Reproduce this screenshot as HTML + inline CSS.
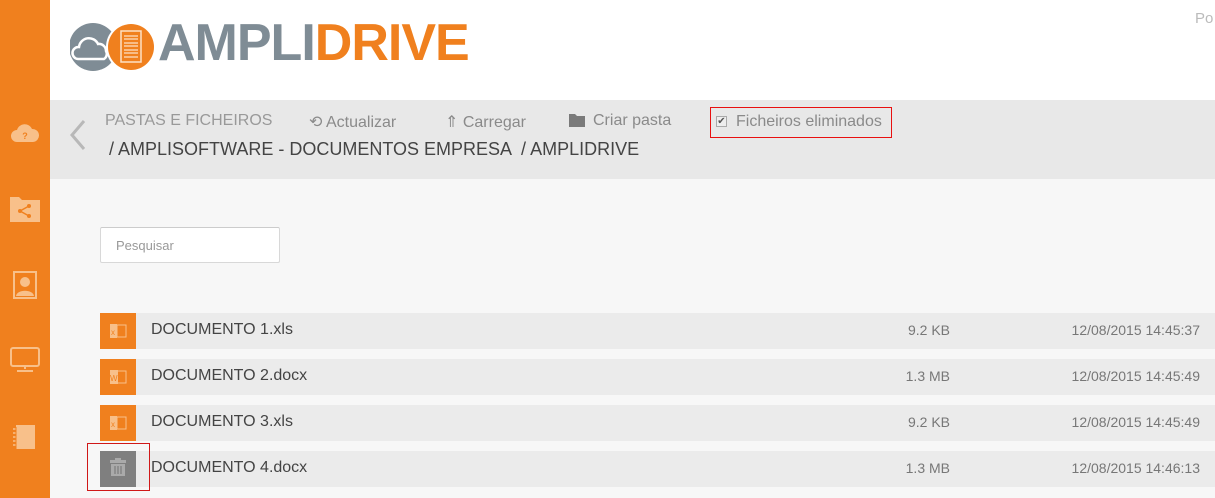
<!DOCTYPE html>
<html><head><meta charset="utf-8"><style>
*{margin:0;padding:0;box-sizing:border-box}
body{width:1215px;height:498px;overflow:hidden;background:#f7f7f7;font-family:"Liberation Sans",sans-serif;position:relative}
.side{position:absolute;left:0;top:0;width:50px;height:498px;background:#f0801e}
.side svg{position:absolute;left:10px}
.head{position:absolute;left:50px;top:0;right:0;height:100px;background:#fff}
.tool{position:absolute;left:50px;top:100px;right:0;height:79px;background:#e8e8e8}
.t{position:absolute;font-size:16px;color:#8a8a8a;white-space:nowrap}
.row{position:absolute;left:100px;right:0;height:36px;background:#ebebeb}
.row .ic{position:absolute;left:0;top:0;width:36px;height:36px;background:#f0801e}
.row .n{position:absolute;left:51px;top:8px;font-size:16px;color:#444}
.row .s{position:absolute;right:265px;top:9px;font-size:14px;color:#777}
.row .d{position:absolute;right:15px;top:9px;font-size:14px;color:#777}
</style></head><body>
<div class="side">
<svg style="top:122px" width="30" height="24" viewBox="0 0 30 24"><path d="M7 20a6 6 0 0 1 0-12 8 8 0 0 1 15-1 6 6 0 0 1 1 13z" fill="#f8c08a"/><text x="15" y="17" font-size="9" font-weight="bold" fill="#f0801e" text-anchor="middle" font-family="Liberation Sans">?</text></svg>
<svg style="top:196px" width="30" height="26" viewBox="0 0 30 26"><path d="M0 1h9l3 3h18v22H0z" fill="#f8c08a"/><circle cx="10" cy="15" r="2" fill="#f0801e"/><circle cx="19" cy="10" r="2" fill="#f0801e"/><circle cx="19" cy="20" r="2" fill="#f0801e"/><path d="M10 15L19 10M10 15L19 20" stroke="#f0801e" stroke-width="1.5"/></svg>
<svg style="top:271px" width="30" height="28" viewBox="0 0 30 28"><rect x="4" y="1" width="22" height="26" fill="none" stroke="#f8c08a" stroke-width="2"/><circle cx="15" cy="11" r="5" fill="#f8c08a"/><path d="M6 25c1-7 17-7 18 0z" fill="#f8c08a"/></svg>
<svg style="top:346px" width="30" height="26" viewBox="0 0 30 26"><rect x="1" y="2" width="28" height="18" rx="2" fill="none" stroke="#f8c08a" stroke-width="2"/><path d="M15 20v3M7 25h16" stroke="#f8c08a" stroke-width="2"/></svg>
<svg style="top:424px" width="30" height="26" viewBox="0 0 30 26"><rect x="6" y="1" width="19" height="24" fill="#f8c08a"/><path d="M3 5h6M3 9h6M3 13h6M3 17h6M3 21h6" stroke="#f8c08a" stroke-width="1.5"/><path d="M6 3v22" stroke="#f0801e" stroke-width="1"/></svg>
</div>
<div class="head">
<svg style="position:absolute;left:20px;top:19px" width="90" height="56" viewBox="0 0 90 56"><circle cx="23" cy="28" r="24" fill="#7f8c95"/><path d="M8 40a6 6 0 0 1 1-12 10 10 0 0 1 19-3 7 7 0 0 1 8 7 6 6 0 0 1-2 8z" fill="none" stroke="#fff" stroke-width="2.5"/><circle cx="61" cy="28" r="25" fill="#fff"/><circle cx="61" cy="28" r="23" fill="#f0801e"/><rect x="51" y="12" width="20" height="31" fill="none" stroke="#fde0c4" stroke-width="1.5"/><path d="M54 17h14M54 20h14M54 24h14M54 27h14M54 31h14M54 34h14M54 38h14" stroke="#fde0c4" stroke-width="1.3"/></svg>
<div style="position:absolute;left:108px;top:13px;font-size:52px;font-weight:bold;letter-spacing:-1px;color:#7f8c95">AMPLI<span style="color:#f0801e">DRIVE</span></div>
<div style="position:absolute;left:1145px;top:10px;font-size:15px;color:#bbb">Po</div>
</div>
<div class="tool">
<svg style="position:absolute;left:18px;top:19px" width="20" height="32" viewBox="0 0 20 32"><path d="M16 2L4 16l12 14" fill="none" stroke="#b8b8b8" stroke-width="3"/></svg>
<div class="t" style="left:55px;top:12px;color:#999">PASTAS E FICHEIROS</div>
<div class="t" style="left:259px;top:12px">⟲ Actualizar</div>
<div class="t" style="left:395px;top:12px">⇑ Carregar</div>
<svg style="position:absolute;left:519px;top:14px" width="16" height="13" viewBox="0 0 16 13"><path d="M0 0h6l2 2h8v11H0z" fill="#7a7a7a"/></svg>
<div class="t" style="left:543px;top:12px">Criar pasta</div>
<div style="position:absolute;left:660px;top:7px;width:182px;height:31px;border:1px solid #e81010"></div>
<div style="position:absolute;left:666px;top:16px;width:11px;height:11px;border:1px solid #aaa;background:#eee;font-size:10px;line-height:9px;text-align:center;color:#555">✔</div>
<div class="t" style="left:686px;top:13px">Ficheiros eliminados</div>
<div class="t" style="left:59px;top:39px;font-size:18px;color:#444">/ AMPLISOFTWARE - DOCUMENTOS EMPRESA &nbsp;/ AMPLIDRIVE</div>
</div>
<div style="position:absolute;left:100px;top:227px;width:180px;height:36px;background:#fff;border:1px solid #d8d8d8;border-top-color:#ccc;border-radius:2px;font-size:13px;color:#999;padding:10px 0 0 15px">Pesquisar</div>

<div class="row" style="top:313px"><div class="ic"><svg width="36" height="36"><rect x="10" y="11" width="7" height="14" fill="#f8c08a"/><rect x="17" y="12" width="9" height="12" fill="none" stroke="#f8c08a"/><text x="11" y="22" font-size="8" fill="#f0801e" font-family="Liberation Sans">x</text></svg></div><div class="n">DOCUMENTO 1.xls</div><div class="s">9.2 KB</div><div class="d">12/08/2015 14:45:37</div></div>
<div class="row" style="top:359px"><div class="ic"><svg width="36" height="36"><rect x="10" y="11" width="8" height="14" fill="#f8c08a"/><rect x="17" y="12" width="9" height="12" fill="none" stroke="#f8c08a"/><text x="10" y="22" font-size="8" fill="#f0801e" font-family="Liberation Sans">W</text></svg></div><div class="n">DOCUMENTO 2.docx</div><div class="s">1.3 MB</div><div class="d">12/08/2015 14:45:49</div></div>
<div class="row" style="top:405px"><div class="ic"><svg width="36" height="36"><rect x="10" y="11" width="7" height="14" fill="#f8c08a"/><rect x="17" y="12" width="9" height="12" fill="none" stroke="#f8c08a"/><text x="11" y="22" font-size="8" fill="#f0801e" font-family="Liberation Sans">x</text></svg></div><div class="n">DOCUMENTO 3.xls</div><div class="s">9.2 KB</div><div class="d">12/08/2015 14:45:49</div></div>
<div class="row" style="top:451px"><div class="ic" style="background:#7f7f7f"><svg width="36" height="36"><rect x="10" y="9" width="16" height="3" fill="#aaa"/><rect x="15" y="7" width="6" height="2" fill="#aaa"/><path d="M11 13h14v12H11z" fill="#aaa"/><path d="M15 15v8M18 15v8M21 15v8" stroke="#7f7f7f" stroke-width="1.3"/></svg></div><div class="n">DOCUMENTO 4.docx</div><div class="s">1.3 MB</div><div class="d">12/08/2015 14:46:13</div></div>
<div style="position:absolute;left:87px;top:443px;width:63px;height:48px;border:1px solid #d01818"></div>
</body></html>
